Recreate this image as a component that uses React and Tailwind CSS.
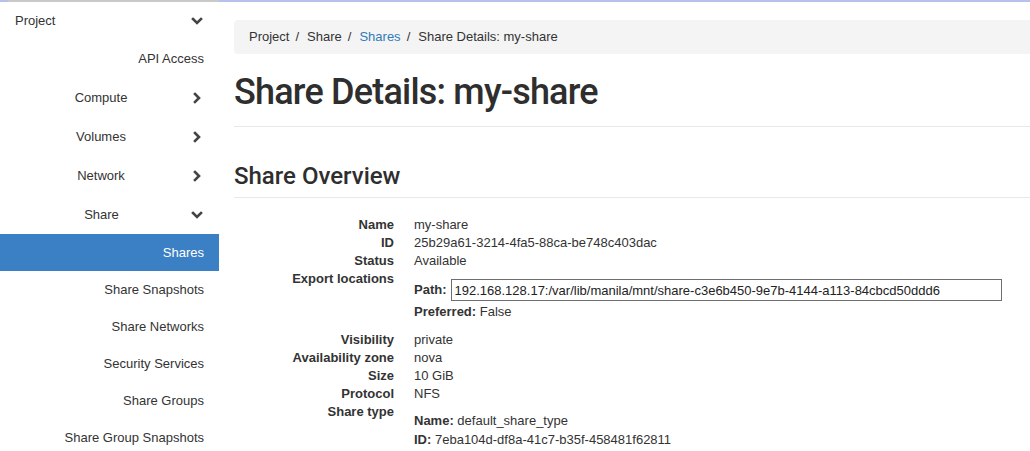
import React from 'react';

const font = { fontFamily: '"Liberation Sans", Helvetica, Arial, sans-serif' };
const headFont = { fontFamily: 'Roboto, "Liberation Sans", Helvetica, Arial, sans-serif' };

function Chevron({ dir = 'right' }) {
  // font-awesome style heavy chevron
  return (
    <svg width="12" height="12" viewBox="0 0 12 12" className="shrink-0">
      {dir === 'right' ? (
        <polyline points="4,2 8,6 4,10" fill="none" stroke="#444" strokeWidth="2.6" strokeLinecap="square" strokeLinejoin="miter" />
      ) : (
        <polyline points="2,4 6,8 10,4" fill="none" stroke="#444" strokeWidth="2.6" strokeLinecap="square" strokeLinejoin="miter" />
      )}
    </svg>
  );
}

const leafItems = ['Share Snapshots', 'Share Networks', 'Security Services', 'Share Groups', 'Share Group Snapshots'];

function Sidebar() {
  return (
    <aside className="w-[219px] shrink-0 text-[13px] text-[#333]">
      <div className="h-[38px] flex items-center pl-[15px] pr-[16px]">
        <span className="flex-1">Project</span>
        <Chevron dir="down" />
      </div>
      <div className="h-[38px] flex items-center justify-end pr-[15px]">API Access</div>
      {['Compute', 'Volumes', 'Network'].map((t) => (
        <div key={t} className="h-[39px] flex items-center pr-[16px]">
          <span className="flex-1 text-center pl-[11px]">{t}</span>
          <Chevron />
        </div>
      ))}
      <div className="h-[39px] flex items-center pr-[16px]">
        <span className="flex-1 text-center pl-[12px]">Share</span>
        <Chevron dir="down" />
      </div>
      <div className="h-[37px] flex items-center justify-end pr-[15px] bg-[#3b7fc4] text-white">Shares</div>
      {leafItems.map((t) => (
        <div key={t} className="h-[37px] flex items-center justify-end pr-[15px]">{t}</div>
      ))}
    </aside>
  );
}

function Row({ label, children }) {
  return (
    <>
      <dt className="font-bold text-right whitespace-nowrap">{label}</dt>
      <dd>{children}</dd>
    </>
  );
}

export default function App() {
  return (
    <div className="w-[1030px] h-[451px] overflow-hidden bg-white text-[#333]" style={font}>
      <div className="h-[2px] flex">
        <div className="w-[8px] bg-[#b7c0ef]" />
        <div className="w-[211px] bg-[#c9c9c9]" />
        <div className="flex-1 bg-[#b7c0ef]" />
      </div>
      <div className="flex">
        <Sidebar />
        <main className="flex-1 min-w-0 pl-[15px] pt-[18px]">
          <div className="h-[34px] bg-[#f4f4f4] rounded-l-[4px] flex items-center pl-[15px] text-[13px] text-[#333]">
            <span>Project</span>
            <span className="pl-[6px] pr-[7px]">/</span>
            <span className="pl-[1px]">Share</span>
            <span className="pl-[6px] pr-[7px]">/</span>
            <span className="pl-[1px] text-[#337ab7]">Shares</span>
            <span className="pl-[6px] pr-[7px]">/</span>
            <span className="pl-[1px]">Share Details: my-share</span>
          </div>
          <h1 className="mt-[18px] text-[36px] leading-[40px] font-medium tracking-[-0.8px] text-[#2e2e2e]" style={headFont}>Share Details: my-share</h1>
          <div className="mt-[14px] border-t border-[#e8e8e8]" />
          <h2 className="mt-[36px] text-[24px] leading-[26px] font-medium text-[#2e2e2e]" style={headFont}>Share Overview</h2>
          <div className="mt-[8px] border-t border-[#e8e8e8]" />
          <dl className="mt-[18px] grid grid-cols-[160px_1fr] gap-x-[20px] text-[13px] leading-[18px] text-[#333]">
            <Row label="Name">my-share</Row>
            <Row label="ID">25b29a61-3214-4fa5-88ca-be748c403dac</Row>
            <Row label="Status">Available</Row>
            <Row label="Export locations">
              <div className="pt-[9px] pb-[10px]">
                <div className="h-[22px] flex items-center">
                  <span className="font-bold mr-[4px]">Path:</span>
                  <input
                    readOnly
                    value="192.168.128.17:/var/lib/manila/mnt/share-c3e6b450-9e7b-4144-a113-84cbcd50ddd6"
                    className="w-[551px] h-[22px] border border-[#6e6e6e] px-[3px] text-[13px] text-[#222] outline-none"
                    style={font}
                  />
                </div>
                <div className="mt-[2px]">
                  <span className="font-bold">Preferred:</span> False
                </div>
              </div>
            </Row>
            <Row label="Visibility">private</Row>
            <Row label="Availability zone">nova</Row>
            <Row label="Size">10 GiB</Row>
            <Row label="Protocol">NFS</Row>
            <Row label="Share type">
              <div className="pt-[9px]">
                <div><span className="font-bold">Name:</span> default_share_type</div>
                <div className="mt-[1px]"><span className="font-bold">ID:</span> 7eba104d-df8a-41c7-b35f-458481f62811</div>
              </div>
            </Row>
          </dl>
        </main>
      </div>
    </div>
  );
}
